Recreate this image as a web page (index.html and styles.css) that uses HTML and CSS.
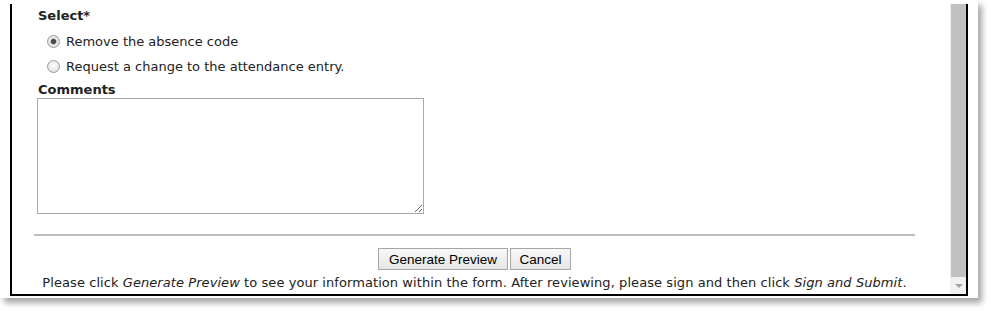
FILE: index.html
```html
<!DOCTYPE html>
<html lang="en">
<head>
<meta charset="utf-8">
<title>Attendance change request</title>
<link rel="stylesheet" href="styles.css">
</head>
<body>
<div class="window">
  <div class="frame">
    <main class="main">
      <form class="form">
        <div class="field-label">Select*</div>
        <div class="options">
          <label class="option"><input type="radio" name="sel" class="radio" checked> Remove the absence code</label>
          <label class="option"><input type="radio" name="sel" class="radio"> Request a change to the attendance entry.</label>
        </div>
        <div class="field-label comments-label">Comments</div>
        <textarea class="comments"></textarea>
        <div class="rule"></div>
        <div class="actions">
          <button type="button" class="btn btn-preview">Generate Preview</button>
          <button type="button" class="btn btn-cancel">Cancel</button>
        </div>
        <p class="note">Please click <em>Generate Preview</em> to see your information within the form. After reviewing, please sign and then click <em>Sign and Submit</em>.</p>
      </form>
    </main>
    <div class="scrollbar">
      <div class="thumb"></div>
      <div class="arrow"></div>
    </div>
  </div>
</div>
</body>
</html>
```

FILE: styles.css
```css
html, body {
  margin: 0;
  padding: 0;
  background: #ffffff;
}

body {
  font-family: "DejaVu Sans", Verdana, sans-serif;
  color: #222;
  width: 991px;
  height: 311px;
  overflow: hidden;
}

.window {
  width: 978px;
  box-sizing: border-box;
  padding: 4px 10px 2px 10px;
  background: #fff;
  box-shadow: 4px 5px 6px rgba(0, 0, 0, 0.35);
}

.frame {
  display: flex;
  height: 290px;
  border-left: 2px solid #000;
  border-right: 2px solid #000;
  border-bottom: 2px solid #000;
  overflow: hidden;
}

.main {
  flex: 1;
  padding-left: 22px;
}

.form {
  width: 881px;
}

.field-label {
  font-weight: bold;
  font-size: 13px;
  line-height: 16px;
  padding-left: 4px;
  margin-top: 4px;
  color: #222;
}

.options {
  margin-top: 5px;
  padding-left: 13px;
}

.option {
  display: flex;
  align-items: center;
  height: 25px;
  font-size: 13px;
  color: #222;
}

.radio {
  appearance: none;
  -webkit-appearance: none;
  width: 13px;
  height: 13px;
  margin: 0 6px 0 0;
  border: 1px solid #9a9a9a;
  border-radius: 50%;
  box-sizing: border-box;
  background: radial-gradient(circle at 50% 40%, #fdfdfd 0%, #e4e4e4 70%, #d0d0d0 100%);
}

.radio:checked {
  background: radial-gradient(circle, #4a4a4a 0 2.2px, #9a9a9a 2.6px, #e8e8e8 3.4px, #dcdcdc 100%);
}

.comments-label {
  margin-top: 3px;
}

.comments {
  display: block;
  margin: 0 0 0 3px;
  width: 387px;
  height: 116px;
  box-sizing: border-box;
  border: 1px solid #a9a9a9;
  resize: both;
  font-family: "DejaVu Sans", sans-serif;
  font-size: 12px;
}

.rule {
  margin-top: 20px;
  border-top: 2px solid #bdbdbd;
}

.actions {
  display: flex;
  justify-content: center;
  gap: 2px;
  margin-top: 12px;
}

.btn {
  font-family: "Liberation Sans", Arial, sans-serif;
  font-size: 13.5px;
  color: #000;
  height: 22px;
  border: 1px solid #a6a6a6;
  border-radius: 0;
  background: linear-gradient(#f8f8f8, #e6e6e6);
}

.btn-preview {
  padding: 0 10px;
}

.btn-cancel {
  padding: 0 8.5px;
}

.note {
  margin: 5px 0 0 0;
  text-align: center;
  font-size: 13px;
  letter-spacing: 0.07px;
  line-height: 16px;
  color: #222;
}

.note em {
  font-style: italic;
}

.scrollbar {
  width: 16px;
  background: #f1f1f1;
  position: relative;
}

.thumb {
  margin-left: 1px;
  width: 15px;
  height: 273px;
  background: #c1c1c1;
}

.arrow {
  position: absolute;
  left: 5px;
  top: 280px;
  width: 0;
  height: 0;
  border-left: 4px solid transparent;
  border-right: 4px solid transparent;
  border-top: 4px solid #a3a3a3;
}
```
